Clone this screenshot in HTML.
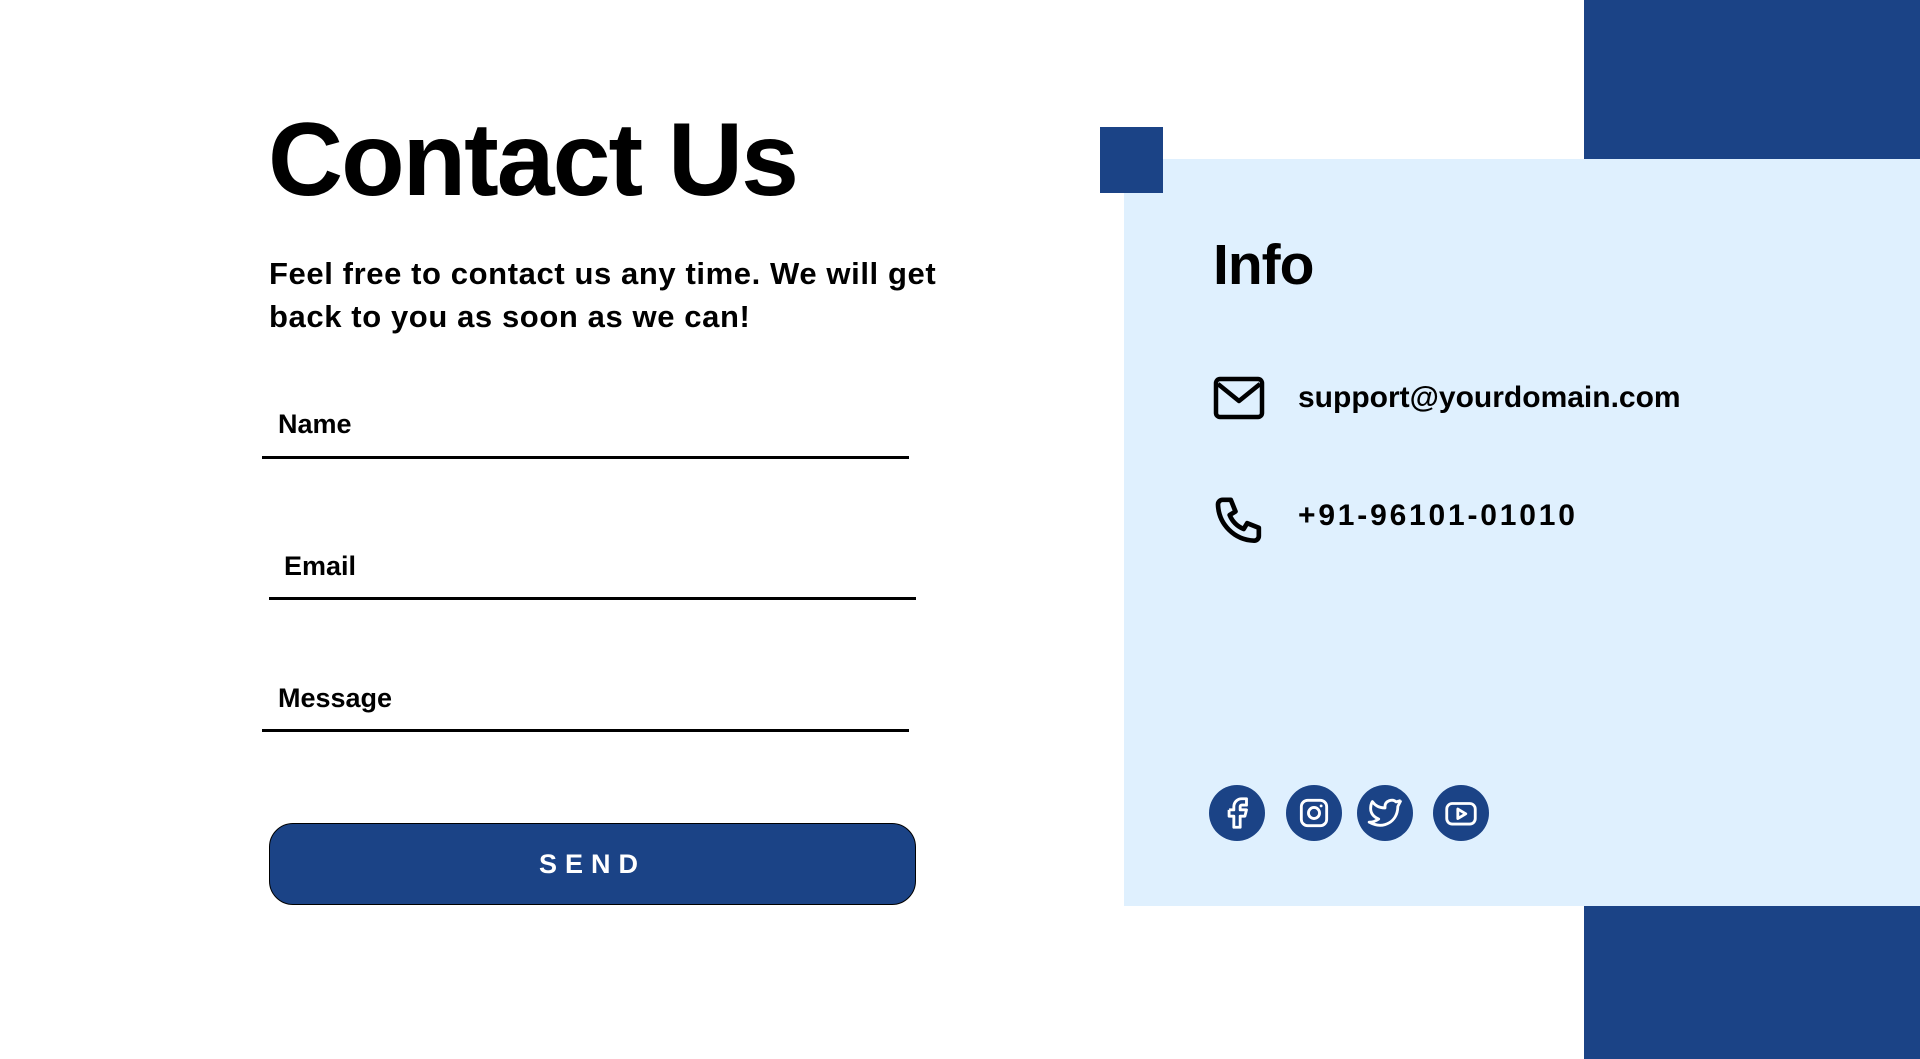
<!DOCTYPE html>
<html><head><meta charset="utf-8"><style>
*{margin:0;padding:0;box-sizing:border-box}
body{width:1920px;height:1059px;background:#fff;position:relative;overflow:hidden;font-family:"Liberation Sans",sans-serif;color:#000}
.abs{position:absolute}
.dark{background:#1b4386}
h1{position:absolute;left:268px;top:108px;font-size:104px;font-weight:bold;letter-spacing:-2px;line-height:1}
.sub{left:269px;top:252px;font-size:31px;font-weight:bold;line-height:43px;letter-spacing:0.6px}
.lbl{font-size:27px;font-weight:bold}
.line{height:3px;background:#000}
.btn{left:269px;top:823px;width:647px;height:82px;border:1px solid #000;border-radius:24px;background:#1b4386;color:#fff;font-weight:bold;font-size:27px;letter-spacing:8px;text-align:center;line-height:80px}
.info{left:1213px;top:232px;font-size:57px;font-weight:bold;letter-spacing:-1px}
.ct{font-size:30px;font-weight:bold}
.soc{width:56px;height:56px;border-radius:50%;background:#1b4386;top:785px}
.soc svg{position:absolute;left:9px;top:9px}
</style></head><body>
<div class="abs dark" style="left:1584px;top:0;width:336px;height:159px"></div>
<div class="abs" style="left:1124px;top:159px;width:796px;height:747px;background:#dff0fe"></div>
<div class="abs dark" style="left:1584px;top:906px;width:336px;height:153px"></div>
<div class="abs dark" style="left:1100px;top:127px;width:63px;height:66px"></div>

<h1>Contact Us</h1>
<div class="abs sub">Feel free to contact us any time. We will get<br>back to you as soon as we can!</div>

<div class="abs lbl" style="left:278px;top:409px">Name</div>
<div class="abs line" style="left:262px;top:456px;width:647px"></div>
<div class="abs lbl" style="left:284px;top:551px">Email</div>
<div class="abs line" style="left:269px;top:597px;width:647px"></div>
<div class="abs lbl" style="left:278px;top:683px">Message</div>
<div class="abs line" style="left:262px;top:729px;width:647px"></div>
<div class="abs btn">SEND</div>

<div class="abs info">Info</div>
<svg class="abs" style="left:1213px;top:376px" width="52" height="44" viewBox="0 0 52 44"><rect x="3" y="3" width="46" height="38" rx="4" fill="none" stroke="#000" stroke-width="4.5"/><path d="M5 8 L26 25 L47 8" fill="none" stroke="#000" stroke-width="4.5" stroke-linejoin="round"/></svg>
<div class="abs ct" style="left:1298px;top:381px">support@yourdomain.com</div>
<svg class="abs" style="left:1211px;top:494px" width="56" height="56" viewBox="0 0 24 24"><path d="M5 2.5h3.5l2 5-2.5 1.5a11 11 0 0 0 6 6l1.5-2.5 5 2v3.5a2 2 0 0 1-2 2A16 16 0 0 1 3 4.5a2 2 0 0 1 2-2" fill="none" stroke="#000" stroke-width="2" stroke-linejoin="round"/></svg>
<div class="abs ct" style="left:1298px;top:499px;letter-spacing:2.8px">+91-96101-01010</div>

<div class="abs soc" style="left:1209px"><svg width="38" height="38" viewBox="0 0 24 24"><path d="M7 10v4h3v7h4v-7h3l1-4h-4V8a1 1 0 0 1 1-1h3V3h-3a5 5 0 0 0-5 5v2H7" fill="none" stroke="#fff" stroke-width="1.8" stroke-linejoin="round"/></svg></div>
<div class="abs soc" style="left:1286px"><svg width="38" height="38" viewBox="0 0 24 24"><rect x="4" y="4" width="16" height="16" rx="4" fill="none" stroke="#fff" stroke-width="1.8"/><circle cx="12" cy="12" r="3.5" fill="none" stroke="#fff" stroke-width="1.8"/><circle cx="16.5" cy="7.5" r="0.9" fill="#fff"/></svg></div>
<div class="abs soc" style="left:1357px"><svg width="38" height="38" viewBox="0 0 24 24"><path d="M22 4.01c-1 .49-1.98.69-3 .99-1.12-1.26-2.78-1.33-4.38-.73S11.980 6.1 12 7.8v1c-3.25.08-6.14-1.4-8-4 0 0-4.19 7.45 4 11-1.87 1.25-3.75 2.1-6 2 3.29 1.8 6.88 2.41 9.99 1.51 3.56-1.03 6.49-3.7 7.61-7.7.33-1.21.5-2.47.5-3.73 0-.25 1.51-2.77 1.9-3.88" fill="none" stroke="#fff" stroke-width="1.8" stroke-linejoin="round"/></svg></div>
<div class="abs soc" style="left:1433px"><svg width="38" height="38" viewBox="0 0 24 24"><rect x="3" y="6" width="18" height="13" rx="3.5" fill="none" stroke="#fff" stroke-width="1.8"/><path d="M10 9.5v6l5-3z" fill="none" stroke="#fff" stroke-width="1.8" stroke-linejoin="round"/></svg></div>
</body></html>
